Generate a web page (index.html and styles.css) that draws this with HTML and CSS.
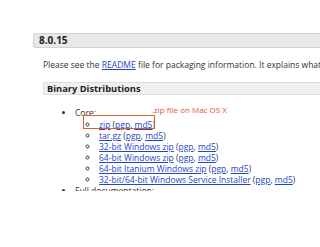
FILE: index.html
```html
<!DOCTYPE html>
<html lang="en">
<head>
  <meta charset="UTF-8">
  <title>Tomcat 8.0.15</title>
  <link rel="stylesheet" href="styles.css">
</head>
<body>
  <div class="page">
    <h3 class="version">8.0.15</h3>
    <p class="intro">Please see the <a href="#">README</a> file for packaging information. It explains what</p>

    <div class="section">
      <h4 class="section-title">Binary Distributions</h4>
      <ul class="dist">
        <li>Core:
          <span class="note">.zip file on Mac OS X</span>
          <ul class="files">
            <li><a href="#">zip</a> (<a href="#">pgp</a>, <a href="#">md5</a>)<span class="mark"></span></li>
            <li><a href="#">tar.gz</a> (<a href="#">pgp</a>, <a href="#">md5</a>)</li>
            <li><a href="#">32-bit Windows zip</a> (<a href="#">pgp</a>, <a href="#">md5</a>)</li>
            <li><a href="#">64-bit Windows zip</a> (<a href="#">pgp</a>, <a href="#">md5</a>)</li>
            <li><a href="#">64-bit Itanium Windows zip</a> (<a href="#">pgp</a>, <a href="#">md5</a>)</li>
            <li><a href="#">32-bit/64-bit Windows Service Installer</a> (<a href="#">pgp</a>, <a href="#">md5</a>)</li>
          </ul>
        </li>
        <li>Full documentation:</li>
      </ul>
    </div>
  </div>
</body>
</html>
```

FILE: styles.css
```css
body {
  margin: 0;
  background: #fff;
  font-family: 'Open Sans', sans-serif;
  font-size: 8.5px;
  color: #333;
  overflow: hidden;
}

.page {
  height: 191px;
  overflow: hidden;
  padding-top: 33px;
  padding-left: 33px;
  box-sizing: border-box;
  white-space: nowrap;
}

a {
  color: #2545c8;
  text-decoration: underline;
}

.version {
  margin: 0;
  height: 13px;
  line-height: 13px;
  padding-left: 5px;
  font-size: 10px;
  font-weight: bold;
  color: #222;
  background: #e8e8e8;
  border: 1px solid #d2d2d2;
  border-right: none;
  border-radius: 3px 0 0 3px;
}

.intro {
  margin: 10px 0 0 10px;
  line-height: 14px;
}

.section {
  margin-left: 10px;
  margin-top: 10px;
}

.section-title {
  margin: 0;
  height: 11px;
  line-height: 11px;
  padding-left: 3px;
  font-size: 9.3px;
  font-weight: bold;
  color: #222;
  background: #f0f0f0;
  border: 1px solid #dcdcdc;
  border-right: none;
  border-radius: 2px 0 0 2px;
}

.dist {
  margin: 12px 0 0;
  padding-left: 32px;
  list-style: disc;
  line-height: 11px;
}

.dist > li {
  position: relative;
}

.files {
  margin: 1px 0 0;
  padding-left: 24px;
  list-style: circle;
}

.files li {
  position: relative;
}

.note {
  position: absolute;
  left: 77px;
  top: -3px;
  font-size: 8px;
  color: #e2533a;
}

.mark {
  position: absolute;
  left: -16px;
  top: -4px;
  width: 70px;
  height: 12px;
  border: 1px solid #d9602e;
}
```
